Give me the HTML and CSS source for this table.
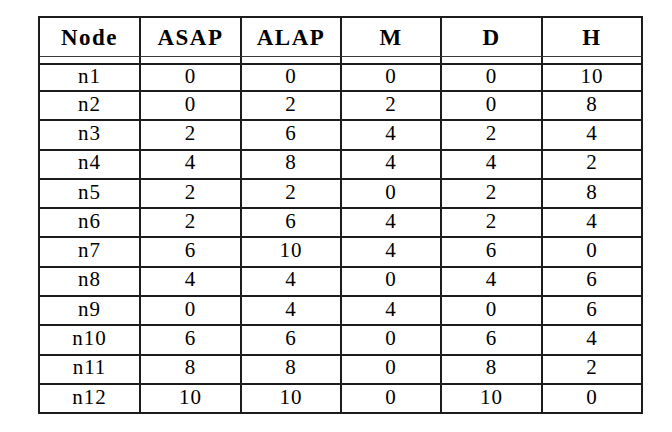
FILE: index.html
```html
<!DOCTYPE html>
<html>
<head>
<meta charset="utf-8">
<link rel="stylesheet" href="styles.css">
</head>
<body>
<table class="sched">
  <colgroup>
    <col class="c101"><col class="c101"><col class="c100"><col class="c100"><col class="c101"><col class="c100">
  </colgroup>
  <thead>
    <tr class="head"><th>Node</th><th>ASAP</th><th>ALAP</th><th>M</th><th>D</th><th>H</th></tr>
    <tr class="gap"><td></td><td></td><td></td><td></td><td></td><td></td></tr>
  </thead>
  <tbody>
    <tr class="first"><td>n1</td><td>0</td><td>0</td><td>0</td><td>0</td><td>10</td></tr>
    <tr><td>n2</td><td>0</td><td>2</td><td>2</td><td>0</td><td>8</td></tr>
    <tr><td>n3</td><td>2</td><td>6</td><td>4</td><td>2</td><td>4</td></tr>
    <tr><td>n4</td><td>4</td><td>8</td><td>4</td><td>4</td><td>2</td></tr>
    <tr><td>n5</td><td>2</td><td>2</td><td>0</td><td>2</td><td>8</td></tr>
    <tr><td>n6</td><td>2</td><td>6</td><td>4</td><td>2</td><td>4</td></tr>
    <tr><td>n7</td><td>6</td><td>10</td><td>4</td><td>6</td><td>0</td></tr>
    <tr><td>n8</td><td>4</td><td>4</td><td>0</td><td>4</td><td>6</td></tr>
    <tr><td>n9</td><td>0</td><td>4</td><td>4</td><td>0</td><td>6</td></tr>
    <tr><td>n10</td><td>6</td><td>6</td><td>0</td><td>6</td><td>4</td></tr>
    <tr><td>n11</td><td>8</td><td>8</td><td>0</td><td>8</td><td>2</td></tr>
    <tr><td>n12</td><td>10</td><td>10</td><td>0</td><td>10</td><td>0</td></tr>
  </tbody>
</table>
</body>
</html>
```

FILE: styles.css
```css
html, body {
  margin: 0;
  padding: 0;
  background: #ffffff;
}
body {
  padding: 16px 0 0 38px;
  font-family: "Liberation Serif", "Times New Roman", serif;
  color: #000;
}
.sched {
  border-collapse: separate;
  border-spacing: 0;
  table-layout: fixed;
  width: 605px;
  border-left: 2px solid #1c1c1c;
  border-top: 2px solid #1c1c1c;
}
.c101 { width: 101px; }
.c100 { width: 100px; }
.sched th,
.sched td {
  padding: 0;
  text-align: center;
  border-right: 2px solid #1c1c1c;
  border-bottom: 2px solid #1c1c1c;
  box-sizing: border-box;
  line-height: 1;
}
.sched th {
  height: 39px;
  font-size: 23px;
  font-weight: bold;
  letter-spacing: 1.5px;
  border-bottom: 1px solid #3a3a3a;
  padding-top: 1px;
}
.sched .gap td {
  height: 8px;
}
.sched td {
  height: 29.3px;
  font-size: 21px;
  letter-spacing: 1px;
  vertical-align: middle;
  padding-bottom: 3px;
}
.sched .first td {
  height: 27px;
}
```
